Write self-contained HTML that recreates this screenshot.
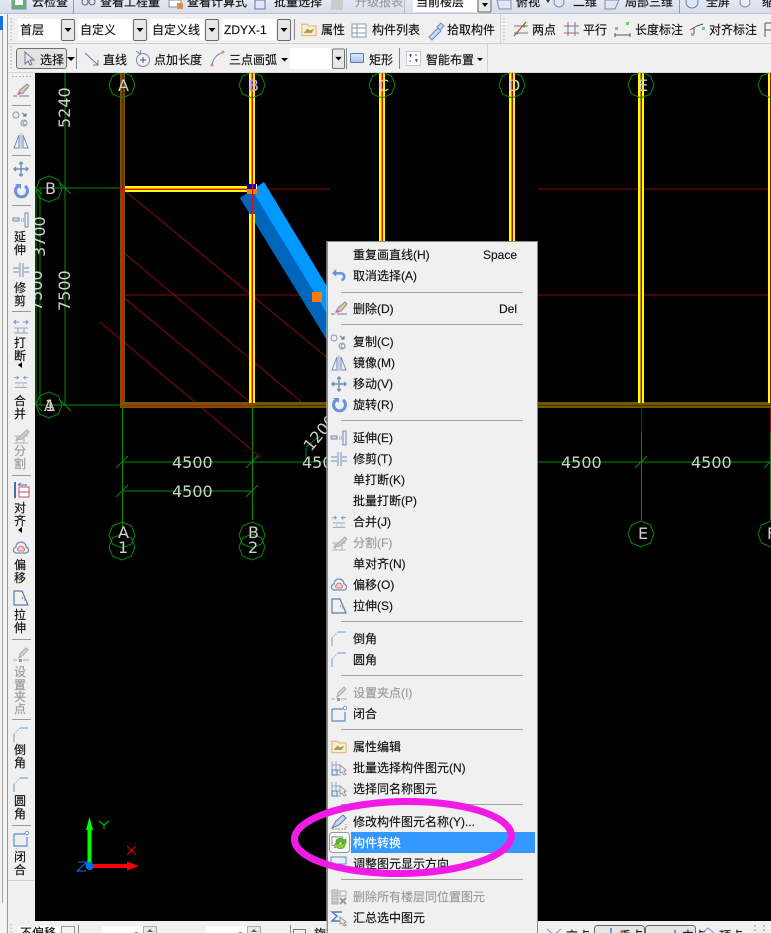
<!DOCTYPE html>
<html><head><meta charset="utf-8"><style>
html,body{margin:0;padding:0;background:#000;width:771px;height:933px;overflow:hidden}
svg{display:block;position:absolute;left:0;top:0}
text{font-family:"Liberation Sans","Noto Sans CJK SC",sans-serif;font-size:12px;fill:#111;stroke:#111;stroke-width:.15}
.d{font-family:"DejaVu Sans",sans-serif;font-size:16px;fill:#cfcfcf;stroke:none}
.g{fill:#9a9a9a;stroke:#9a9a9a}
.v{text-anchor:middle}
</style></head><body>
<svg width="771" height="933" viewBox="0 0 771 933" xmlns="http://www.w3.org/2000/svg">
<defs>
<linearGradient id="top" x1="0" y1="0" x2="0" y2="1"><stop offset="0" stop-color="#e4e9f2"/><stop offset="1" stop-color="#d5dcea"/></linearGradient>
<linearGradient id="rect" x1="0" y1="0" x2="0" y2="1"><stop offset="0" stop-color="#dfe9fb"/><stop offset="1" stop-color="#a9c3ee"/></linearGradient>
<symbol id="brush" viewBox="0 0 16 16" overflow="visible"><path d="M0 14h4M6 14h10" stroke="#778" fill="none"/><path d="M5 12l2-4 7-6 2 2-6 7z" fill="#d8cfa0" stroke="#889"/><path d="M4 13l2-4 3 3z" fill="#e060c0"/></symbol>
<symbol id="copy" viewBox="0 0 16 16" overflow="visible"><circle cx="3" cy="4" r="3" fill="none" stroke="#8a97b0"/><circle cx="11" cy="12" r="3" fill="none" stroke="#8a97b0"/><circle cx="12" cy="12" r="2" fill="none" stroke="#8a97b0"/><path d="M9 2l4 3M13 2v3h-3" stroke="#667" fill="none"/></symbol>
<symbol id="mirror" viewBox="0 0 16 16" overflow="visible"><path d="M6 2L1 15h5zM10 2l5 13h-5z" fill="none" stroke="#6d8bc4"/><path d="M8 0v16" stroke="#aaa"/></symbol>
<symbol id="move" viewBox="0 0 16 16" overflow="visible"><path d="M8 1v14M1 8h14M6 3l2-2 2 2M6 13l2 2 2-2M3 6L1 8l2 2M13 6l2 2-2 2" stroke="#6f8fb5" stroke-width="1.4" fill="none"/></symbol>
<symbol id="rotate" viewBox="0 0 16 16" overflow="visible"><path d="M5 3a6 6 0 1 0 7 0" stroke="#6b93de" stroke-width="3" fill="none"/><path d="M2 1h6v5z" fill="#6b93de"/></symbol>
<symbol id="extend" viewBox="0 0 16 16" overflow="visible"><path d="M12 1h3v14h-3z" fill="none" stroke="#6f8fb5"/><path d="M0 6h6v3H0z" fill="#dde" stroke="#6f8fb5"/><path d="M8 7h3M8 9h3" stroke="#6f8fb5" stroke-dasharray="1 1"/></symbol>
<symbol id="trim" viewBox="0 0 16 16" overflow="visible"><path d="M0 6h6M0 10h6M7 1v14M10 1v14M11 6h5M11 10h5" stroke="#6f8fb5" fill="none"/></symbol>
<symbol id="undo" viewBox="0 0 16 16" overflow="visible"><path d="M4 6h6a4 4 0 0 1 2 8" stroke="#6b93de" stroke-width="3" fill="none"/><path d="M6 1v9L1 6z" fill="#6b93de"/></symbol>
<symbol id="break" viewBox="0 0 16 16" overflow="visible"><path d="M1 3h5M15 3h-5M3 1L1 3l2 2M13 1l2 2-2 2" stroke="#6b93de" fill="none"/><path d="M1 9h14M1 14h14M5 9v5M11 9v5" stroke="#9aa6bc" fill="none"/></symbol>
<symbol id="merge" viewBox="0 0 16 16" overflow="visible"><path d="M0 3h5l-2-2M0 3l0 0M16 3h-5l2-2M5 3L3 5M11 3l2 2" stroke="#6b93de" fill="none"/><path d="M1 9h14M1 14h14" stroke="#8a97b0" fill="none"/><path d="M5 9v5M11 9v5" stroke="#c8ccd4"/></symbol>
<symbol id="split" viewBox="0 0 16 16" overflow="visible"><path d="M1 8h14M1 15h14M4 8v7M11 8v7" stroke="#b4b4b4" fill="none"/><path d="M3 12L14 2l2 2-7 7z" fill="#d0d0d0" stroke="#aaa"/></symbol>
<symbol id="align" viewBox="0 0 16 16" overflow="visible"><path d="M1 0h2v16H1z" fill="#4a6ca8"/><path d="M6 5h10v5H6zM6 10h10v5H6z" fill="#fff" stroke="#c05070"/><path d="M5 3h9M5 3l3-2" stroke="#5060c0" fill="none"/></symbol>
<symbol id="offset" viewBox="0 0 16 16" overflow="visible"><path d="M4 13a3 3 0 0 1-1-6 5 5 0 0 1 10 0 3 3 0 0 1-1 6z" fill="none" stroke="#6f8fb5" stroke-width="1.3"/><path d="M5.5 11a1.6 1.6 0 0 1 0-3 2.600 2.600 0 0 1 5 0 1.600 1.600 0 0 1 0 3z" fill="#f4d0d0" stroke="#e07070"/></symbol>
<symbol id="stretch" viewBox="0 0 16 16" overflow="visible"><path d="M1 15V1h8l6 14z" fill="none" stroke="#5c7ba8" stroke-width="1.200"/><path d="M9 7l1 2M11 10h1" stroke="#888"/></symbol>
<symbol id="grip" viewBox="0 0 16 16" overflow="visible"><path d="M0 14h4M10 14h6" stroke="#aaa"/><path d="M6 12l1-4 6-6 2 2-6 6z" fill="#d6d6d6" stroke="#aaa"/><path d="M6 13h3v3H6z" fill="#999"/></symbol>
<symbol id="chamfer" viewBox="0 0 16 16" overflow="visible"><path d="M1 15V7M7 1h8" stroke="#6a9bd0" fill="none"/><path d="M1 7l6-6" stroke="#6a9bd0" stroke-dasharray="1 1.500"/></symbol>
<symbol id="close" viewBox="0 0 16 16" overflow="visible"><path d="M1 3h11M1 3v12h13V6" stroke="#5c8bc4" fill="none" stroke-width="1.200"/><circle cx="14" cy="2" r="1.700" fill="#fff" stroke="#6a9bd0"/></symbol>
<symbol id="prop" viewBox="0 0 18 16" overflow="visible"><path d="M1 2h6l2 2h8v11H1z" fill="#fdeec8" stroke="#e0a868"/><path d="M3 12l4-5 3 2 5-2-3 5z" fill="#a0a060"/></symbol>
<symbol id="batch" viewBox="0 0 16 16" overflow="visible"><path d="M1 1v14h9M1 5h8M1 10h8M5 1v14" stroke="#9aa6bc" fill="none"/><path d="M1 10h5v5H1z" fill="#dfe8fb" stroke="#5c7ba8"/><path d="M9 5l6 5-2 1 2 3-2 1-2-3-2 1z" fill="#eee" stroke="#999"/></symbol>
<symbol id="edit" viewBox="0 0 16 16" overflow="visible"><path d="M1 14l4-7 7-6 3 3-7 7z" fill="#c8d6ee" stroke="#6078a8"/><path d="M1 15h14V10" stroke="#b08080" stroke-dasharray="2 1" fill="none"/></symbol>
<symbol id="dir" viewBox="0 0 16 16" overflow="visible"><path d="M0 1h15v7H0z" fill="#e6eefc" stroke="#5c8bc4"/><path d="M2 12h10" stroke="#888"/></symbol>
<symbol id="del" viewBox="0 0 16 16" overflow="visible"><path d="M1 1h6v14H1z" fill="#d8d8d8" stroke="#aaa"/><path d="M1 4h6M1 7h6M1 10h6M1 13h6" stroke="#aaa"/><path d="M9 2h6v5H9z" fill="none" stroke="#aaa"/><path d="M9 9l6 6M15 9l-6 6" stroke="#999" stroke-width="2"/></symbol>
<symbol id="sum" viewBox="0 0 16 16" overflow="visible"><path d="M11 2H1l5 4-5 5h9" stroke="#4a78c8" stroke-width="1.400" fill="none"/><path d="M9 7l6 5-2 1 2 2-2 1-2-3-2 1z" fill="#eee" stroke="#999"/></symbol>
<symbol id="conv" viewBox="0 0 18 16" overflow="visible"><path d="M1 2h11v9H1z" fill="#fff" stroke="#889"/><path d="M5 8a5 4 0 0 1 9-3l2-1v5h-5l2-1a3 2 0 0 0-5 1z" fill="#5cb82c" stroke="#3a8a10" stroke-width=".5"/><path d="M15 10a5 4 0 0 1-9 3l-2 1V9h5l-2 1a3 2 0 0 0 5-1z" fill="#8ad030" stroke="#3a8a10" stroke-width=".5"/></symbol>
<symbol id="arr" viewBox="0 0 14 28" overflow="visible"><rect x=".5" y=".5" width="13" height="21" rx="1.500" fill="#e8e8e8" stroke="#6a6a6a"/><path d="M3.500 9h7L7 13z" fill="#000"/></symbol>
<symbol id="o" viewBox="0 0 26 26" overflow="visible"><path d="M13 0L22.500 4 26 13 22.500 22 13 26 3.500 22 0 13 3.500 4z" fill="none" stroke="#0a8a0a"/></symbol>
<symbol id="tick" viewBox="0 0 12 12" overflow="visible"><path d="M0 12L12 0" stroke="#0a8a0a"/></symbol>
</defs>

<!-- canvas -->
<rect x="0" y="0" width="771" height="933" fill="#000"/>
<g stroke="#0a8a0a" fill="none">
<path d="M65 73V405M40 188H120M36 405H125M36 188V405M40 188V405"/>
<path d="M122.500 405V530M252.500 405V520M641.500 433V520M770.500 433V520"/>
<path d="M122 462H327M538 462H771M122 491H252"/>
<path d="M306 448V462M306 447L320 436"/>
</g>
<g>
<use href="#tick" x="116" y="456" width="12" height="12"/><use href="#tick" x="246" y="456" width="12" height="12"/><use href="#tick" x="116" y="485" width="12" height="12"/><use href="#tick" x="246" y="485" width="12" height="12"/><use href="#tick" x="635" y="456" width="12" height="12"/><use href="#tick" x="764" y="456" width="12" height="12"/>
<use href="#tick" x="59" y="182" width="12" height="12" transform="rotate(90 65 188)"/><use href="#tick" x="59" y="399" width="12" height="12" transform="rotate(90 65 405)"/><use href="#tick" x="30" y="182" width="12" height="12" transform="rotate(90 36 188)"/><use href="#tick" x="30" y="399" width="12" height="12" transform="rotate(90 36 405)"/>
</g>
<g stroke="#8a0a0a" fill="none">
<path d="M123 295H330M255 189H330M538 189H771M538 295H771"/>
<path d="M125 191L335 364M123 252L305 405M123 297L250 402M100 322L260 457"/>
<path d="M641.500 405V433M770.500 405V433"/>
</g>
<!-- olive and yellow walls -->
<g>
<rect x="120" y="73" width="5" height="335" fill="#665c00"/><rect x="122" y="188" width="1.500" height="218" fill="#e01000"/><rect x="122" y="73" width="1.500" height="115" fill="#7a1c00"/>
<rect x="120" y="402" width="651" height="6" fill="#665c00"/>
<rect x="122" y="405" width="131" height="1.500" fill="#d01000"/><rect x="253" y="405" width="518" height="1" fill="#6a1a00"/>
<rect x="249" y="73" width="6" height="330" fill="#ff0"/><rect x="251.500" y="73" width="1.500" height="330" fill="#e01000"/>
<rect x="379" y="73" width="6" height="330" fill="#ff0"/><rect x="381.500" y="73" width="1.500" height="330" fill="#e01000"/>
<rect x="509" y="73" width="6" height="330" fill="#ff0"/><rect x="511.500" y="73" width="1.500" height="330" fill="#a01000"/>
<rect x="638" y="73" width="6" height="330" fill="#ff0"/><rect x="640.500" y="73" width="1.500" height="330" fill="#a01000"/>
<rect x="768" y="73" width="3" height="330" fill="#ff0"/><rect x="770" y="73" width="1" height="330" fill="#a01000"/>
<rect x="125" y="186" width="124" height="6" fill="#ff0"/><rect x="125" y="188.500" width="124" height="1.500" fill="#e01000"/>
<rect x="120" y="188" width="5" height="3" fill="#e01000"/>
</g>
<polygon points="240,198 264,182 331,293 331,346 327,340" fill="#0099ff"/>
<polygon points="240,198 252,190 331,320 331,346" fill="#0066bb"/>
<rect x="249" y="214" width="6" height="30" fill="#ff0"/><rect x="251.500" y="192" width="1.500" height="60" fill="#e01000"/>
<rect x="312" y="292" width="10" height="10" fill="#ff7a00"/>
<rect x="247" y="184" width="10" height="10" fill="#fff"/><rect x="247" y="184" width="5" height="5" fill="#0000e0"/><rect x="252" y="184" width="4" height="5" fill="#0000e0"/><rect x="247" y="189" width="10" height="5" fill="#ff7a00"/>
<rect x="252" y="184" width="1" height="20" fill="#e01000"/>
<!-- grid bubbles -->
<g>
<use href="#o" x="109" y="72" width="26" height="26"/><use href="#o" x="239" y="72" width="26" height="26"/><use href="#o" x="369" y="72" width="26" height="26"/><use href="#o" x="499" y="72" width="26" height="26"/><use href="#o" x="628" y="72" width="26" height="26"/><use href="#o" x="758" y="72" width="26" height="26"/>
<use href="#o" x="36" y="176" width="26" height="26"/><use href="#o" x="36" y="392" width="26" height="26"/>
<use href="#o" x="109" y="522" width="26" height="26"/><use href="#o" x="109" y="534" width="26" height="26"/><use href="#o" x="239" y="522" width="26" height="26"/><use href="#o" x="239" y="534" width="26" height="26"/><use href="#o" x="628" y="521" width="26" height="26"/><use href="#o" x="758" y="521" width="26" height="26"/>
</g>
<g class="lab">
<text class="d" x="118" y="91">A</text><text class="d" x="248" y="91" style="fill:#aab4ff">B</text><text class="d" x="378" y="91">C</text><text class="d" x="508" y="91">D</text><text class="d" x="638" y="91">E</text>
<text class="d" x="45" y="194">B</text><text class="d" x="44" y="411">A</text><text class="d" x="45" y="411">1</text>
<text class="d" x="118" y="538">A</text><text class="d" x="118" y="553">1</text><text class="d" x="248" y="538">B</text><text class="d" x="248" y="553">2</text><text class="d" x="638" y="539">E</text><text class="d" x="767" y="539">F</text>
<text class="d" x="172" y="468">4500</text><text class="d" x="302" y="468">4500</text><text class="d" x="561" y="468">4500</text><text class="d" x="691" y="468">4500</text><text class="d" x="172" y="497">4500</text>
<text class="d" transform="translate(70,128) rotate(-90)">5240</text>
<text class="d" transform="translate(70,311) rotate(-90)">7500</text>
<text class="d" transform="translate(45,257) rotate(-90)">3700</text>
<text class="d" transform="translate(42,311) rotate(-90)">7500</text>
<text class="d" transform="translate(311,452) rotate(-50)">1200</text>
</g>
<!-- gizmo -->
<path d="M87.500 866V830H86l3.500-13 3.500 13h-1.500V866z" fill="#00ff00"/>
<path d="M89 864H127V861.500l12 4.500-12 4.500V868H89z" fill="#ff0000"/>
<circle cx="89.500" cy="866" r="4" fill="#0070f0"/>
<path d="M99 821l5 4 5-4M104 825v4" stroke="#00e000" fill="none"/>
<path d="M127 846l9 9M136 846l-9 9" stroke="#e00000" fill="none"/>
<path d="M78 862h9l-10 9h9" stroke="#1070f0" fill="none"/>

<!-- left side -->
<rect x="0" y="14" width="7" height="919" fill="#f4f4f4"/>
<rect x="0" y="16" width="3" height="14" fill="#1a6fe0"/>
<rect x="2" y="30" width="1" height="873" fill="#a8a8a8"/>
<rect x="7" y="14" width="1" height="919" fill="#9a9a9a"/>
<rect x="8" y="14" width="27" height="907" fill="#f0f0f0"/>
<rect x="8" y="880" width="27" height="1" fill="#cfcfcf"/>
<rect x="8" y="881" width="27" height="52" fill="#f0f0f0"/>
<path d="M12 76.500H33" stroke="#aaa" stroke-dasharray="1.500 2"/>
<g stroke="#999"><path d="M12 105.500H31M12 155.500H31M12 205.500H31M12 311.500H31M12 475.500H31M12 639.500H31M12 719.500H31M12 825.500H31"/></g>
<g>
<use href="#brush" x="13" y="82" width="16" height="16"/><use href="#copy" x="13" y="111" width="16" height="16"/><use href="#mirror" x="13" y="133" width="16" height="16"/><use href="#move" x="13" y="161" width="16" height="16"/><use href="#rotate" x="13" y="183" width="16" height="16"/><use href="#extend" x="13" y="212" width="16" height="16"/><use href="#trim" x="13" y="262" width="16" height="16"/><use href="#break" x="13" y="319" width="16" height="16"/><use href="#merge" x="13" y="375" width="16" height="14"/><use href="#split" x="13" y="428" width="16" height="16"/><use href="#align" x="13" y="482" width="16" height="16"/><use href="#offset" x="13" y="540" width="16" height="16"/><use href="#stretch" x="13" y="590" width="16" height="16"/><use href="#grip" x="13" y="646" width="16" height="16"/><use href="#chamfer" x="13" y="727" width="16" height="16"/><use href="#chamfer" x="13" y="777" width="16" height="16"/><use href="#close" x="13" y="831" width="16" height="16"/>
</g>
<g class="side">
<text class="v" x="20" y="241">延</text><text class="v" x="20" y="254">伸</text>
<text class="v" x="20" y="292">修</text><text class="v" x="20" y="305">剪</text>
<text class="v" x="20" y="347">打</text><text class="v" x="20" y="360">断</text><path d="M22 362v6l-4-3z" fill="#000"/>
<text class="v" x="20" y="405">合</text><text class="v" x="20" y="418">并</text>
<text class="v g" x="20" y="455">分</text><text class="v g" x="20" y="468">割</text>
<text class="v" x="20" y="512">对</text><text class="v" x="20" y="525">齐</text><path d="M22 527v6l-4-3z" fill="#000"/>
<text class="v" x="20" y="569">偏</text><text class="v" x="20" y="582">移</text>
<text class="v" x="20" y="619">拉</text><text class="v" x="20" y="632">伸</text>
<text class="v g" x="20" y="676">设</text><text class="v g" x="20" y="689">置</text><text class="v g" x="20" y="701">夹</text><text class="v g" x="20" y="713">点</text>
<text class="v" x="20" y="754">倒</text><text class="v" x="20" y="767">角</text>
<text class="v" x="20" y="805">圆</text><text class="v" x="20" y="818">角</text>
<text class="v" x="20" y="861">闭</text><text class="v" x="20" y="874">合</text>
</g>

<!-- toolbars -->
<rect x="0" y="0" width="771" height="14" fill="url(#top)"/>
<rect x="0" y="13" width="771" height="1" fill="#b9c2d2"/>
<rect x="8" y="14" width="763" height="59" fill="#f0f0f0"/>
<rect x="8" y="43" width="763" height="1" fill="#cfcfcf"/>
<rect x="8" y="72" width="763" height="1" fill="#d6d6d6"/>
<rect x="487" y="44" width="1" height="29" fill="#d2d2d2"/><rect x="500" y="14" width="1" height="29" fill="#d2d2d2"/>
<g>
<rect x="12" y="-4" width="14" height="13" fill="#5cb870" stroke="#88a"/><rect x="15" y="-4" width="8" height="9" fill="#fff"/>
<text x="32" y="6">云检查</text><rect x="73" y="0" width="1" height="14" fill="#99a"/>
<circle cx="85" cy="2" r="3" fill="none" stroke="#667"/><circle cx="92" cy="2" r="3" fill="none" stroke="#667"/>
<text x="100" y="6">查看工程量</text>
<rect x="169" y="0" width="12" height="7" fill="#fff" stroke="#889"/><rect x="177" y="3" width="6" height="6" fill="#e09040"/>
<text x="187" y="6">查看计算式</text>
<rect x="255" y="0" width="10" height="9" fill="#dfe8fb" stroke="#6078a8"/>
<text x="274" y="6">批量选择</text>
<rect x="331" y="0" width="12" height="10" fill="#ccc"/>
<text x="355" y="6" class="g">升级报表</text>
<rect x="404" y="0" width="1" height="13" fill="#bbb"/>
<rect x="413" y="0" width="64" height="12" fill="#fff"/><text x="416" y="6">当前楼层</text>
<rect x="478" y="-4" width="13" height="16" rx="1" fill="#e8e8e8" stroke="#666"/><path d="M482 3h6l-3 4z"/>
<path d="M497 0h14v9h-12z" fill="#dfe8fb" stroke="#889"/>
<text x="516" y="6">俯视</text><path d="M546 0h4l-2 3z" fill="#333"/>
<circle cx="559" cy="2" r="5" fill="#dfe8fb" stroke="#7a8aa8"/>
<text x="573" y="6">二维</text>
<path d="M605 0h14l-4 9h-10z" fill="#dfe8fb" stroke="#889"/>
<text x="625" y="6">局部三维</text>
<rect x="679" y="0" width="1" height="13" fill="#99a"/>
<circle cx="692" cy="2" r="6" fill="#dfe8fb" stroke="#5c7ba8"/>
<text x="706" y="6">全屏</text>
<circle cx="745" cy="2" r="5" fill="#f0f0f0" stroke="#7a8aa8"/>
<text x="762" y="6">缩放</text>
</g>
<!-- row 2 -->
<path d="M11 18V41" stroke="#aaa" stroke-dasharray="1.500 2"/>
<g>
<rect x="18" y="19" width="42" height="21" fill="#fff"/><use href="#arr" x="61" y="19" width="14" height="28"/><text x="20" y="34">首层</text>
<rect x="78" y="19" width="54" height="21" fill="#fff"/><use href="#arr" x="133" y="19" width="14" height="28"/><text x="80" y="34">自定义</text>
<rect x="150" y="19" width="54" height="21" fill="#fff"/><use href="#arr" x="205" y="19" width="14" height="28"/><text x="152" y="34">自定义线</text>
<rect x="222" y="19" width="54" height="21" fill="#fff"/><use href="#arr" x="277" y="19" width="14" height="28"/><text x="224" y="34">ZDYX-1</text>
<rect x="294" y="19" width="1" height="21" fill="#888"/>
<use href="#prop" x="301" y="22" width="16" height="15"/><text x="321" y="34">属性</text>
<path d="M352 24h14v13h-14zM352 28h14M352 33h14M357 24v13" fill="#fff" stroke="#8a97b0"/><text x="372" y="34">构件列表</text>
<path d="M429 37l9-9 3 3-9 9zM437 27l4-4 3 3-4 4z" fill="#c8d6ee" stroke="#6a90c8"/><text x="447" y="34">拾取构件</text>
<path d="M504 18V41" stroke="#aaa" stroke-dasharray="1.500 2"/>
<path d="M514 26h14M514 33h14" stroke="#8a6a8a"/><path d="M514 36l12-14" stroke="#d03030"/><circle cx="517" cy="33" r="1.500" fill="#60a040"/><circle cx="524" cy="26" r="1.500" fill="#60a040"/><text x="532" y="34">两点</text>
<path d="M564 26h15M564 33h15" stroke="#c06060"/><path d="M568 22v14M575 22v14" stroke="#6078b8"/><text x="583" y="34">平行</text>
<rect x="615" y="27" width="3" height="3" fill="#70d070"/><rect x="626" y="22" width="3" height="3" fill="#70d070"/><path d="M615 35h15M615 33v4M630 33v4" stroke="#556" fill="none"/><text x="635" y="34">长度标注</text>
<path d="M690 30l7-4 6-2M694 34l0-6" stroke="#556" fill="none"/><rect x="691" y="33" width="3" height="3" fill="#70d070"/><rect x="702" y="27" width="3" height="3" fill="#70d070"/><text x="709" y="34">对齐标注</text>
<path d="M765 23v14M765 23h6M765 30h6" stroke="#556" fill="none"/>
</g>
<!-- row 3 -->
<path d="M11 46V70" stroke="#aaa" stroke-dasharray="1.500 2"/>
<g>
<rect x="16.500" y="48.500" width="50" height="20" rx="2.500" fill="#e2e2e2" stroke="#6f6f6f"/>
<path d="M25 52v12l3-3 2 4 2-1-2-4h4z" fill="#dfe8fb" stroke="#778"/><text x="40" y="64">选择</text><path d="M67 57h8l-4 4z"/>
<rect x="76" y="48" width="1" height="21" fill="#888"/>
<path d="M85 53l13 12M93 65h5v-5" stroke="#5c7ba8" fill="none"/><text x="103" y="64">直线</text>
<circle cx="143" cy="60" r="6.500" fill="none" stroke="#7a8aa8"/><path d="M140 60h6M143 57v6" stroke="#556"/><path d="M136 51l4 3 1-4" stroke="#7a8aa8" fill="none"/><text x="154" y="64">点加长度</text>
<path d="M212 65q2-10 10-12" stroke="#7a8aa8" fill="none"/><circle cx="212" cy="65" r="1.500" fill="#e08080"/><circle cx="223" cy="52" r="1.500" fill="#e08080"/><text x="229" y="64">三点画弧</text><path d="M281 58h7l-3.500 3.500z"/>
<rect x="290" y="48" width="41" height="21" fill="#fff"/><use href="#arr" x="332" y="48" width="13" height="27"/>
<rect x="346" y="48" width="1" height="21" fill="#888"/>
<rect x="350.500" y="53.500" width="13" height="9" rx="1" fill="url(#rect)" stroke="#5c7ba8"/><text x="369" y="64">矩形</text>
<rect x="399" y="48" width="1" height="21" fill="#888"/>
<rect x="406.500" y="51.500" width="14" height="14" fill="#fff" stroke="#8a97b0" stroke-dasharray="1 1"/><path d="M409 55h3M410.500 54v3M415 60h3M416.500 59v3M415 55h2M409 61h2" stroke="#556"/><text x="426" y="64">智能布置</text><path d="M477 58h6l-3 3z"/>
</g>

<!-- bottom bar -->
<rect x="8" y="921" width="763" height="12" fill="#f0f0f0"/>
<path d="M11 924V933" stroke="#aaa" stroke-dasharray="1.500 2"/>
<g>
<rect x="18" y="926" width="42" height="7" fill="#fff"/>
<text x="20" y="937">不偏移</text>
<rect x="61.500" y="926.500" width="13" height="10" fill="#f4f4f4" stroke="#999"/>
<rect x="78" y="925" width="1" height="8" fill="#888"/>
<text x="83" y="942">X=</text>
<rect x="102" y="926" width="41" height="7" fill="#fff"/><text x="133" y="941">0</text>
<rect x="143.500" y="926.500" width="13" height="8" fill="#e8e8e8" stroke="#aaa"/><path d="M147 932h6l-3-3z" fill="#666"/>
<text x="187" y="942">Y=</text>
<rect x="206" y="926" width="41" height="7" fill="#fff"/><text x="237" y="941">0</text>
<rect x="247.500" y="926.500" width="13" height="8" fill="#e8e8e8" stroke="#aaa"/><path d="M251 932h6l-3-3z" fill="#666"/>
<rect x="290" y="925" width="1" height="8" fill="#888"/>
<rect x="293.500" y="929.500" width="12" height="8" fill="#f4f4f4" stroke="#777"/>
<text x="314" y="938">旋转</text>
<path d="M547 929l7 6M561 929l-7 6" stroke="#6a9bd0" fill="none"/>
<text x="566" y="940">交点</text>
<rect x="594.500" y="925.500" width="50" height="14" rx="3" fill="#e6e6e6" stroke="#666"/><rect x="610" y="928" width="2" height="6" fill="#6a9bd0"/><text x="619" y="940">垂点</text>
<rect x="645.500" y="925.500" width="50" height="14" rx="3" fill="#e6e6e6" stroke="#666"/><rect x="674" y="930" width="2" height="4" fill="#6a9bd0"/><text x="682" y="940">中点</text>
<path d="M702 933l6-5 6 5" stroke="#6a9bd0" fill="none"/>
<text x="719" y="940">顶点</text>
<path d="M754 926h2M763 926h2M754 930h2M763 930h2" stroke="#889"/>
</g>

<!-- context menu -->
<rect x="327.500" y="241.500" width="210" height="700" fill="#f0f0f0" stroke="#8c8c8c"/>
<rect x="326" y="241" width="1" height="692" fill="#bbb" opacity=".6"/>
<g stroke="#a0a0a0"><path d="M341 292.500H523M341 324.500H523M341 420.500H523M341 621.500H523M341 675.500H523M341 729.500H523M341 804.500H523M341 879.500H523"/></g>
<g>
<use href="#undo" x="331" y="268" width="14" height="14"/>
<use href="#brush" x="331" y="300" width="16" height="16"/>
<use href="#copy" x="331" y="334" width="16" height="16"/>
<use href="#mirror" x="331" y="355" width="16" height="16"/>
<use href="#move" x="331" y="376" width="16" height="16"/>
<use href="#rotate" x="331" y="397" width="16" height="16"/>
<use href="#extend" x="331" y="430" width="16" height="16"/>
<use href="#trim" x="331" y="451" width="16" height="16"/>
<use href="#merge" x="331" y="515" width="16" height="14"/>
<use href="#split" x="331" y="535" width="16" height="16"/>
<use href="#offset" x="331" y="577" width="16" height="16"/>
<use href="#stretch" x="331" y="598" width="16" height="16"/>
<use href="#chamfer" x="331" y="631" width="16" height="16"/>
<use href="#chamfer" x="331" y="652" width="16" height="16"/>
<use href="#grip" x="331" y="685" width="16" height="16"/>
<use href="#close" x="331" y="706" width="16" height="16"/>
<use href="#prop" x="331" y="739" width="16" height="15"/>
<use href="#batch" x="331" y="760" width="16" height="16"/>
<use href="#batch" x="331" y="781" width="16" height="16"/>
<use href="#edit" x="331" y="814" width="16" height="16"/>
<rect x="329.500" y="832.500" width="20" height="20" rx="3" fill="#f8f8f8" stroke="#999"/>
<use href="#conv" x="331" y="835" width="17" height="15"/>
<use href="#dir" x="331" y="856" width="16" height="16"/>
<use href="#del" x="331" y="889" width="16" height="16"/>
<use href="#sum" x="331" y="910" width="16" height="16"/>
</g>
<rect x="351" y="832" width="184" height="21" fill="#3399ff"/>
<g>
<text x="353" y="259">重复画直线(H)</text><text x="483" y="259">Space</text>
<text x="353" y="280">取消选择(A)</text>
<text x="353" y="313">删除(D)</text><text x="499" y="313">Del</text>
<text x="353" y="346">复制(C)</text>
<text x="353" y="367">镜像(M)</text>
<text x="353" y="388">移动(V)</text>
<text x="353" y="409">旋转(R)</text>
<text x="353" y="442">延伸(E)</text>
<text x="353" y="463">修剪(T)</text>
<text x="353" y="484">单打断(K)</text>
<text x="353" y="505">批量打断(P)</text>
<text x="353" y="526">合并(J)</text>
<text x="353" y="547" class="g">分割(F)</text>
<text x="353" y="568">单对齐(N)</text>
<text x="353" y="589">偏移(O)</text>
<text x="353" y="610">拉伸(S)</text>
<text x="353" y="643">倒角</text>
<text x="353" y="664">圆角</text>
<text x="353" y="697" class="g">设置夹点(I)</text>
<text x="353" y="718">闭合</text>
<text x="353" y="751">属性编辑</text>
<text x="353" y="772">批量选择构件图元(N)</text>
<text x="353" y="793">选择同名称图元</text>
<text x="353" y="826">修改构件图元名称(Y)...</text>
<text x="353" y="847" style="fill:#fff;stroke:#fff">构件转换</text>
<text x="353" y="868">调整图元显示方向...</text>
<text x="353" y="901" class="g">删除所有楼层同位置图元</text>
<text x="353" y="922">汇总选中图元</text>
</g>
<!-- magenta annotation -->
<ellipse cx="403" cy="837.500" rx="108.500" ry="36" fill="none" stroke="#f21be6" stroke-width="7" transform="rotate(-1 403 837.500)"/>
</svg>
</body></html>
